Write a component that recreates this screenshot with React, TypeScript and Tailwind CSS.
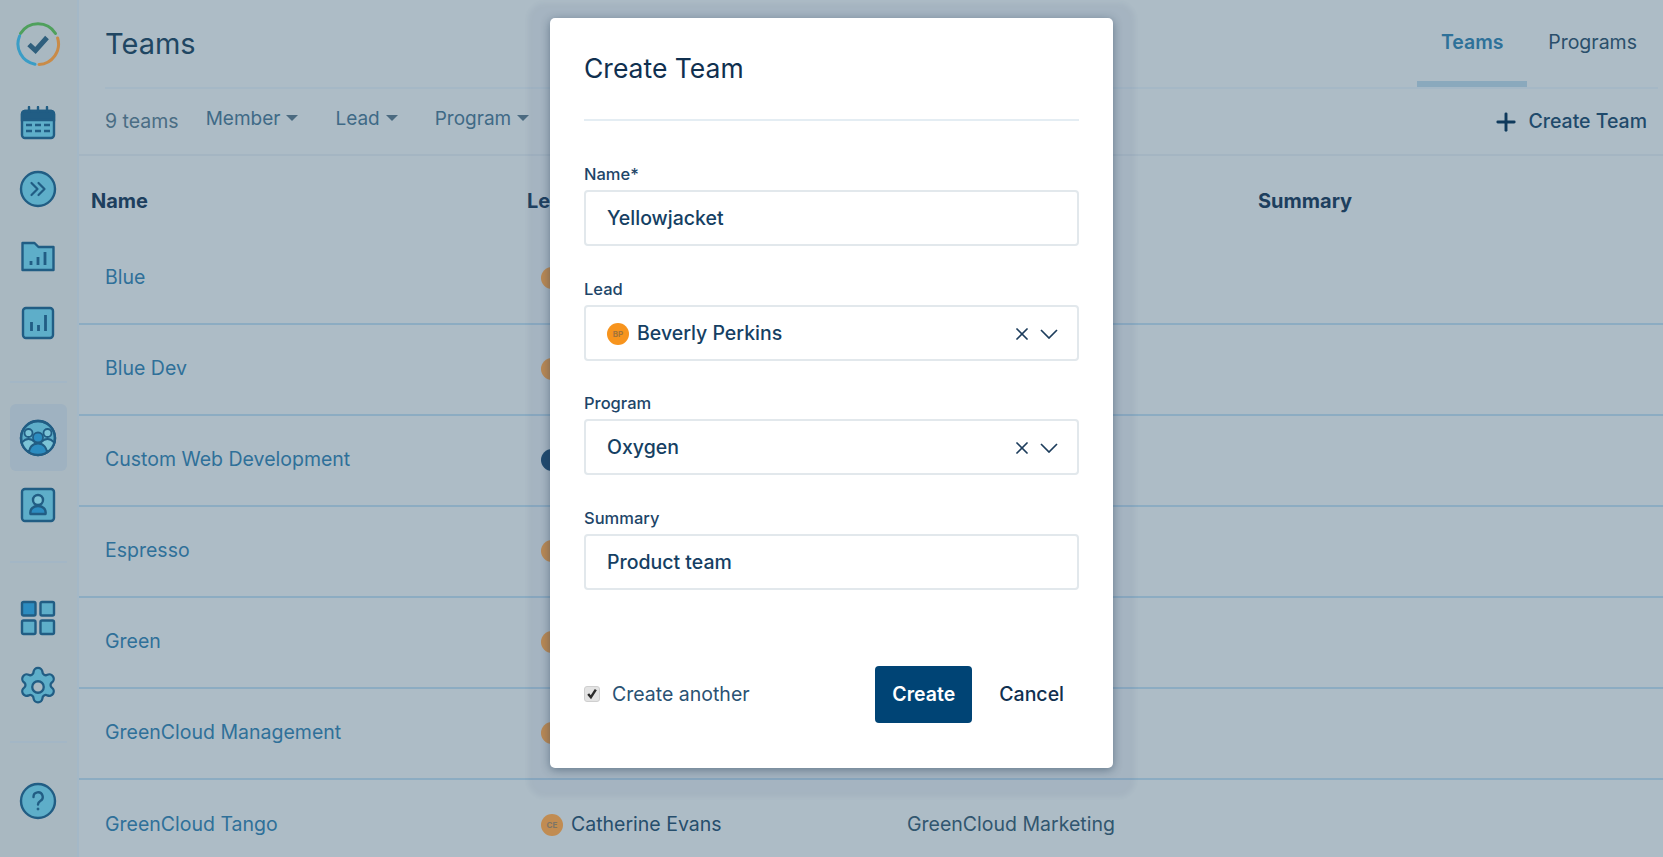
import { Plus, X } from "lucide-react";

const STROKE = "#215d84";
const FILL = "#5eaec9";

const rows = [
  { name: "Blue", avatar: "bg-[#c18c52]" },
  { name: "Blue Dev", avatar: "bg-[#c18c52]" },
  { name: "Custom Web Development", avatar: "bg-[#1f4a6e]" },
  { name: "Espresso", avatar: "bg-[#c18c52]" },
  { name: "Green", avatar: "bg-[#c18c52]" },
  { name: "GreenCloud Management", avatar: "bg-[#c18c52]" },
];

function Logo() {
  return (
    <svg width="46" height="46" viewBox="0 0 46 46" fill="none" strokeWidth="3" strokeLinecap="round">
      <path d="M5.5 12.500A20.500 20.500 0 0 1 40.500 12.500" stroke="#4fa05c" />
      <path d="M42.600 17A20.500 20.500 0 0 1 24 43.500" stroke="#c98b48" />
      <path d="M20 43.200A20.500 20.500 0 0 1 4.600 15" stroke="#3a9dc6" />
      <path d="M14 23.500L20.500 29.500L32 16.500" stroke="#2f5f7d" strokeWidth="5" strokeLinecap="butt" />
    </svg>
  );
}

function CalendarIcon() {
  return (
    <svg width="36" height="34" viewBox="0 0 36 34" stroke={STROKE} strokeWidth="2.400">
      <rect x="2" y="5" width="32" height="27" rx="3" fill={FILL} />
      <path d="M2 14V8a3 3 0 0 1 3-3h26a3 3 0 0 1 3 3v6z" fill={STROKE} />
      <path d="M9 1v5M18 1v5M27 1v5" strokeLinecap="round" />
      <path d="M6 19h6M15 19h6M24 19h6M6 25h6M15 25h6M24 25h6" strokeWidth="2.600" />
    </svg>
  );
}

function ForwardIcon() {
  return (
    <svg width="38" height="38" viewBox="0 0 38 38" fill="none" stroke={STROKE} strokeWidth="2.400">
      <circle cx="19" cy="19" r="17" fill={FILL} />
      <path d="M12.500 13l6 6-6 6M19.500 13l6 6-6 6" strokeWidth="2.200" strokeLinecap="round" strokeLinejoin="round" />
    </svg>
  );
}

function FolderIcon() {
  return (
    <svg width="36" height="32" viewBox="0 0 36 32" stroke={STROKE} strokeWidth="2.400">
      <path d="M2.500 3h12l4 4h15v23h-31z" fill={FILL} strokeLinejoin="round" />
      <path d="M11 25v-4M18 25v-8M25 25V12" strokeWidth="2.800" />
    </svg>
  );
}

function ChartIcon() {
  return (
    <svg width="34" height="34" viewBox="0 0 34 34" stroke={STROKE} strokeWidth="2.400">
      <rect x="2" y="2" width="30" height="30" rx="3" fill={FILL} />
      <path d="M10.500 25v-9M17.500 25v-6M24.500 25V9" strokeWidth="2.800" />
    </svg>
  );
}

function TeamIcon() {
  return (
    <svg width="38" height="38" viewBox="0 0 38 38" stroke={STROKE} strokeWidth="2.400">
      <defs>
        <clipPath id="team-clip">
          <circle cx="19" cy="19" r="17" />
        </clipPath>
      </defs>
      <circle cx="19" cy="19" r="17" fill={FILL} />
      <g clipPath="url(#team-clip)" strokeWidth="1.800">
        <circle cx="9.500" cy="14" r="4" fill="#7cc3d6" />
        <circle cx="28.500" cy="14" r="4" fill="#7cc3d6" />
        <path d="M1 32c0-8 4-12 8.500-12S18 24 18 32z" fill="#7cc3d6" />
        <path d="M20 32c0-8 4-12 8.500-12S37 24 37 32z" fill="#7cc3d6" />
        <circle cx="19" cy="18.500" r="5" fill="#2c8cc0" />
        <path d="M9.500 38c0-10 4-13.500 9.500-13.500S28.500 28 28.500 38z" fill="#2c8cc0" />
      </g>
      <circle cx="19" cy="19" r="17" fill="none" />
    </svg>
  );
}

function UserIcon() {
  return (
    <svg width="36" height="36" viewBox="0 0 36 36" stroke={STROKE} strokeWidth="2.400">
      <rect x="2" y="2" width="32" height="32" rx="3" fill={FILL} />
      <circle cx="18" cy="13" r="5" fill="#7cc3d6" />
      <path d="M10.500 27c-1-5 3-8 7.500-8s8.500 3 7.500 8z" fill="#2c8cc0" strokeLinejoin="round" />
    </svg>
  );
}

function GridIcon() {
  return (
    <svg width="36" height="36" viewBox="0 0 36 36" stroke={STROKE} strokeWidth="2.400">
      <rect x="2" y="2" width="13.500" height="13.500" rx="1.500" fill="#2c8cc0" />
      <rect x="20.500" y="2" width="13.500" height="13.500" rx="1.500" fill={FILL} />
      <rect x="2" y="20.500" width="13.500" height="13.500" rx="1.500" fill={FILL} />
      <rect x="20.500" y="20.500" width="13.500" height="13.500" rx="1.500" fill={FILL} />
    </svg>
  );
}

function GearIcon() {
  return (
    <svg width="46" height="46" viewBox="0 0 24 24" stroke={STROKE} strokeWidth="1.200" strokeLinejoin="round">
      <path
        d="M9.670 4.140a2.340 2.340 0 0 1 4.660 0 1.700 1.700 0 0 0 2.550 1.470 2.340 2.340 0 0 1 2.330 4.040 1.700 1.700 0 0 0 0 2.700 2.340 2.340 0 0 1-2.330 4.040 1.700 1.700 0 0 0-2.550 1.470 2.340 2.340 0 0 1-4.660 0 1.700 1.700 0 0 0-2.550-1.470 2.340 2.340 0 0 1-2.330-4.040 1.700 1.700 0 0 0 0-2.700 2.340 2.340 0 0 1 2.330-4.040 1.700 1.700 0 0 0 2.550-1.470z"
        fill={FILL}
      />
      <circle cx="12" cy="12" r="3" fill="#a9b8c1" />
    </svg>
  );
}

function HelpIcon() {
  return (
    <svg width="38" height="38" viewBox="0 0 38 38" fill="none" stroke={STROKE} strokeWidth="2.400">
      <circle cx="19" cy="19" r="17" fill={FILL} />
      <path d="M14.500 15a4.600 4.600 0 1 1 6.800 4c-1.500.9-2.300 1.700-2.300 3.500" strokeLinecap="round" />
      <circle cx="19" cy="27" r="1" fill={STROKE} strokeWidth="1" />
    </svg>
  );
}

function Caret() {
  return <span className="ml-[6px] mt-[-3px] h-0 w-0 border-x-[6.500px] border-t-[6.500px] border-x-transparent border-t-[#4b6a80]" />;
}

function NavSlot({ children, className = "h-[67px]" }: { children: React.ReactNode; className?: string }) {
  return <div className={`flex items-center justify-center pr-[1px] ${className}`}>{children}</div>;
}

function Field({ label, children, className = "" }: { label: string; children: React.ReactNode; className?: string }) {
  return (
    <div className={className}>
      <div className="mb-[7px] text-[16.500px] leading-[18px] font-medium text-[#1d4568]">{label}</div>
      <div className="flex h-[56px] items-center rounded-[4px] border-2 border-[#e2e8ec] bg-white pl-[21px] pr-[19px] pt-[1px] text-[19.500px] font-medium text-[#153f63]">
        {children}
      </div>
    </div>
  );
}

function SelectControls() {
  return (
    <div className="ml-auto flex items-center gap-[8px] text-[#1d3d5c]">
      <X size={20} strokeWidth={2.100} />
      <svg width="18" height="10" viewBox="0 0 18 10" fill="none" stroke="currentColor" strokeWidth="1.700">
        <path d="M1 1l8 8 8-8" />
      </svg>
    </div>
  );
}

export default function App() {
  return (
    <div className="relative flex h-screen overflow-hidden bg-[#adbcc6] font-['Inter',sans-serif] text-[#1d4560]">
      {/* --- SIDEBAR --- */}
      <aside className="flex w-[79px] shrink-0 flex-col border-r-2 border-[#a4b8c7] bg-[#a9b8c1]">
        <NavSlot className="h-[87px]"><Logo /></NavSlot>
        <NavSlot className="h-[68px] pt-[3px]"><CalendarIcon /></NavSlot>
        <NavSlot><ForwardIcon /></NavSlot>
        <NavSlot><FolderIcon /></NavSlot>
        <NavSlot><ChartIcon /></NavSlot>
        <div className="mx-[10px] mt-[25px] mb-[21px] h-[2px] bg-[#a3b6c5]" />
        <NavSlot className="mx-[10px] h-[67px] rounded-[6px] bg-[#9fb2c1]"><TeamIcon /></NavSlot>
        <NavSlot><UserIcon /></NavSlot>
        <div className="mx-[10px] mt-[23px] mb-[21px] h-[2px] bg-[#a3b6c5]" />
        <NavSlot><GridIcon /></NavSlot>
        <NavSlot className="h-[67px] pt-[4px]"><GearIcon /></NavSlot>
        <div className="mx-[10px] mt-[23px] mb-[24px] h-[2px] bg-[#a3b6c5]" />
        <NavSlot><HelpIcon /></NavSlot>
      </aside>

      {/* --- PAGE --- */}
      <main className="min-w-0 flex-1">
        <header className="ml-[26px] mr-[5px] flex h-[89px] border-b-2 border-[#a5b8c6]">
          <h1 className="mt-[26px] text-[29px] leading-[36px] font-normal text-[#204662]">Teams</h1>
          <nav className="ml-auto flex text-[19.500px]">
            <div className="mb-[-1px] flex h-[87px] w-[110px] justify-center border-b-[6px] border-[#8aa9bd] pt-[28px] font-semibold text-[#2e7199]">Teams</div>
            <div className="ml-[21px] mr-[21px] pt-[28px] text-[#2a4f6b]">Programs</div>
          </nav>
        </header>

        <div className="flex h-[67px] items-center border-b-2 border-[#a4b5c2] pl-[26px] pr-[16px] text-[19.500px]">
          <span className="text-[#4a6d84]">9 teams</span>
          <span className="ml-[27px] mt-[-5px] flex items-center text-[19px] text-[#3f6a86]">Member<Caret /></span>
          <span className="ml-[37px] mt-[-5px] flex items-center text-[19px] text-[#3f6a86]">Lead<Caret /></span>
          <span className="ml-[37px] mt-[-5px] flex items-center text-[19px] text-[#3f6a86]">Program<Caret /></span>
          <span className="ml-auto flex items-center font-medium text-[#1f4a6b]">
            <Plus size={28} strokeWidth={2.500} className="mr-[8px] text-[#0f3a5c]" />
            Create Team
          </span>
        </div>

        <div className="grid h-[78px] grid-cols-[436px_380px_351px_1fr] items-center pt-[12px] pl-[12px] text-[20px] font-bold text-[#1d3f5e]">
          <span>Name</span>
          <span>Lead</span>
          <span>Program</span>
          <span>Summary</span>
        </div>

        {rows.map((row) => (
          <div key={row.name} className="flex h-[91px] items-center border-b-2 border-[#8cacc2] pl-[26px] pb-[1px] text-[19.500px]">
            <span className="w-[436px] text-[#2f7099]">{row.name}</span>
            <span className={`h-[22px] w-[22px] rounded-full ${row.avatar}`} />
          </div>
        ))}
        <div className="flex h-[91px] items-center pl-[26px] pb-[2px] text-[19.500px]">
          <span className="w-[436px] text-[#2f7099]">GreenCloud Tango</span>
          <span className="flex h-[22px] w-[22px] items-center justify-center rounded-full bg-[#c18c52] text-[8px] font-bold text-[#7d7567]">CE</span>
          <span className="ml-[8px] w-[336px] text-[#264e6c]">Catherine Evans</span>
          <span className="text-[#31566f]">GreenCloud Marketing</span>
        </div>
      </main>

      {/* --- MODAL --- */}
      <div className="absolute left-[550px] top-[18px] flex h-[750px] w-[563px] flex-col rounded-[5px] bg-white px-[34px] shadow-[0_2px_10px_rgba(25,50,75,0.45),0_7px_4px_22px_rgba(70,90,130,0.07)]">
        <h2 className="mt-[32px] text-[26.500px] leading-[36px] font-normal text-[#10304f]">Create Team</h2>
        <div className="mt-[33px] h-[2px] bg-[#e4edf3]" />
        <Field label="Name*" className="mt-[44px]">Yellowjacket</Field>
        <Field label="Lead" className="mt-[34px]">
          <span className="mr-[8px] flex h-[22px] w-[22px] items-center justify-center rounded-full bg-[#f7941d] text-[8px] font-bold text-[#a4743a]">BP</span>
          Beverly Perkins
          <SelectControls />
        </Field>
        <Field label="Program" className="mt-[33px]">
          Oxygen
          <SelectControls />
        </Field>
        <Field label="Summary" className="mt-[34px]">Product team</Field>
        <div className="mt-[76px] flex items-center">
          <span className="mt-[-2px] flex h-[16px] w-[16px] items-center justify-center rounded-[3px] border border-[#cfcfcf] bg-[#e3e3e3]">
            <svg width="12" height="12" viewBox="0 0 11 11" fill="none" stroke="#2b2b2b" strokeWidth="2.200">
              <path d="M2 5.500L4.500 8.500L9 1.500" />
            </svg>
          </span>
          <span className="ml-[12px] text-[19.500px] text-[#2a5273]">Create another</span>
          <button className="ml-auto h-[57px] w-[97px] rounded-[4px] bg-[#004475] text-[19.500px] font-semibold text-white">Create</button>
          <button className="ml-[27px] mr-[15px] text-[19.500px] font-medium text-[#10304f]">Cancel</button>
        </div>
      </div>
    </div>
  );
}
